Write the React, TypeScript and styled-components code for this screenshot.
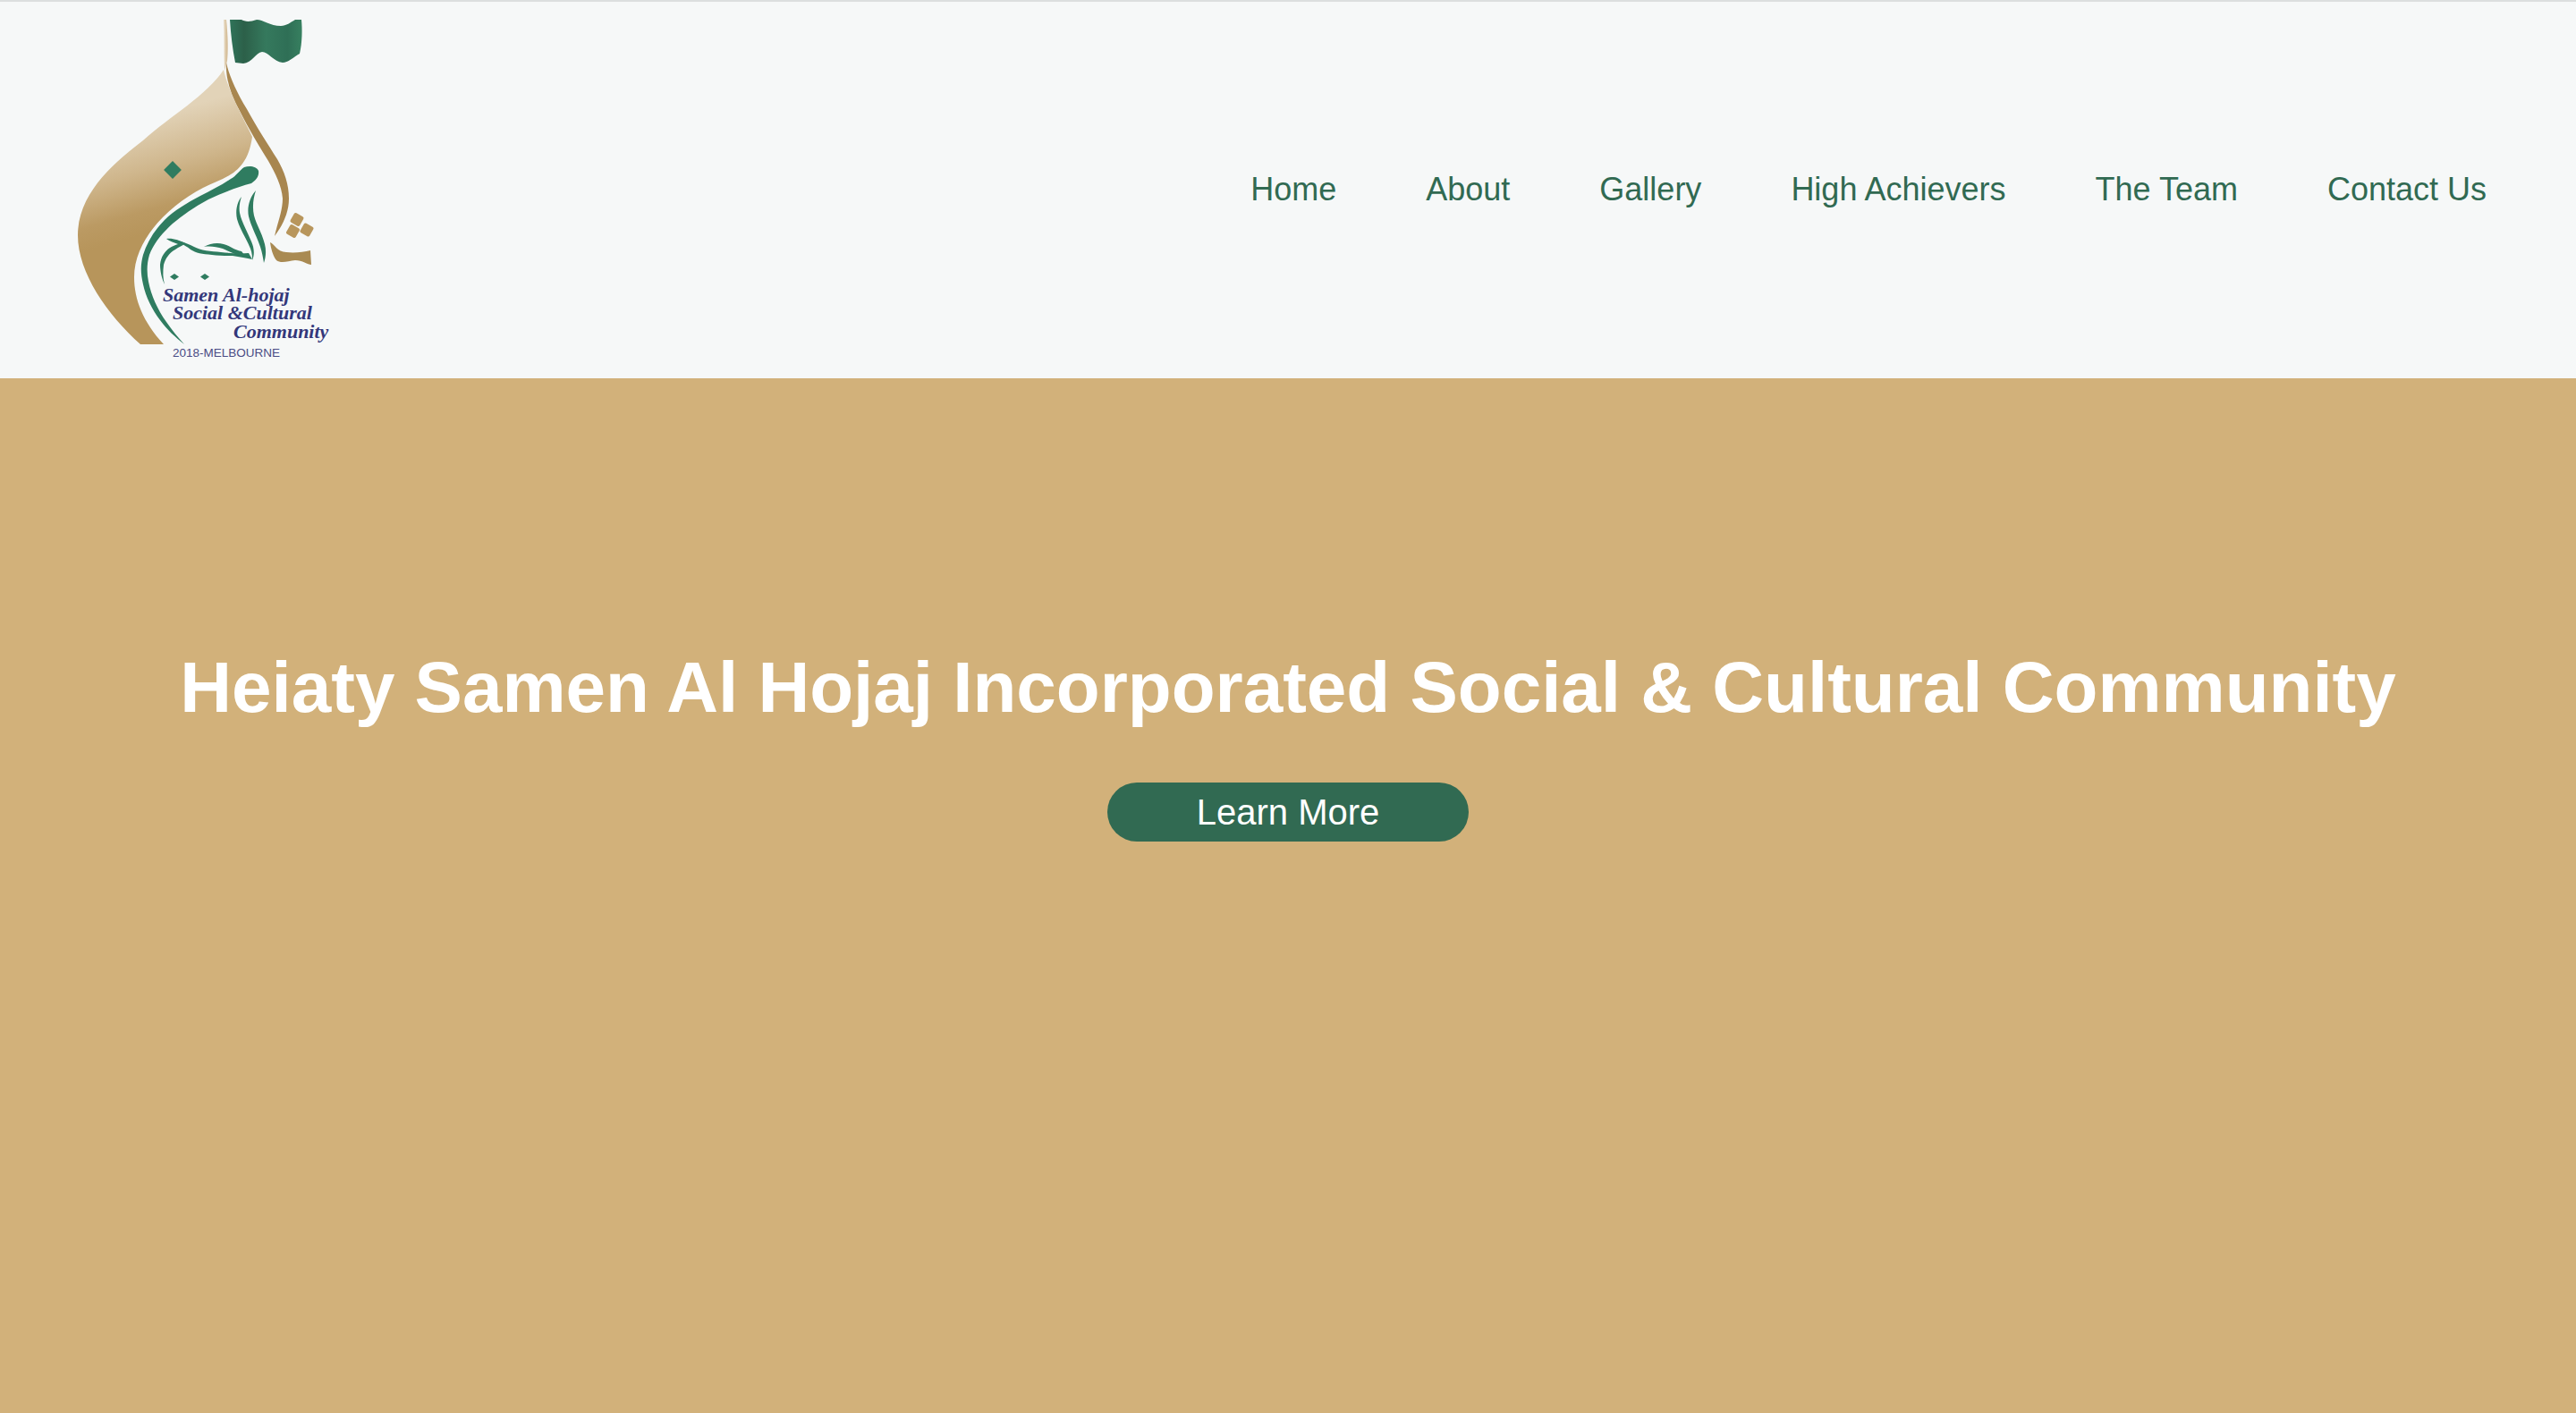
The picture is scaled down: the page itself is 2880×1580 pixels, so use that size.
import React from "react";
import styled, { createGlobalStyle } from "styled-components";

const Global = createGlobalStyle`
  html, body { margin: 0; padding: 0; }
  body { font-family: "Liberation Sans", Arial, sans-serif; background: #d2b17a; }
`;

const Page = styled.div`
  display: flex;
  flex-direction: column;
  width: 2880px;
  height: 1580px;
  overflow: hidden;
`;

const Header = styled.header`
  flex: none;
  box-sizing: border-box;
  height: 423px;
  display: flex;
  align-items: center;
  justify-content: space-between;
  padding: 0 100px 0 60px;
  background: #f6f8f8;
  border-top: 2px solid #dcdfdf;
`;

const LogoSvg = styled.svg`
  display: block;
  width: 340px;
  height: 421px;
  flex: none;
`;

const Nav = styled.nav`
  display: flex;
  gap: 100px;
  align-items: center;
  margin-bottom: 2px;
`;

const NavLink = styled.a`
  font-size: 36px;
  line-height: 44px;
  color: #316a52;
  text-decoration: none;
  white-space: nowrap;
`;

const Hero = styled.main`
  flex: 1;
  display: flex;
  flex-direction: column;
  align-items: center;
  padding-top: 299px;
  background: #d2b17a;
`;

const Title = styled.h1`
  margin: 0;
  font-size: 80px;
  line-height: 94px;
  font-weight: 700;
  color: #ffffff;
  white-space: nowrap;
`;

const LearnMore = styled.a`
  margin-top: 59px;
  box-sizing: border-box;
  width: 404px;
  height: 66px;
  display: flex;
  align-items: center;
  justify-content: center;
  border-radius: 33px;
  background: #316a52;
  color: #ffffff;
  font-size: 40px;
  text-decoration: none;
`;

const GREEN = "#2f7c60";
const TAN = "#b8965c";

const Logo = () => (
  <LogoSvg viewBox="60 2 340 421" aria-label="Samen Al-hojaj logo">
    <defs>
      <linearGradient id="flag" x1="0" x2="1" y1="0" y2="0">
        <stop offset="0" stopColor="#2f7359" />
        <stop offset="0.2" stopColor="#2c6049" />
        <stop offset="0.5" stopColor="#35795d" />
        <stop offset="0.8" stopColor="#2f6f56" />
        <stop offset="1" stopColor="#378060" />
      </linearGradient>
      <linearGradient id="dome" gradientUnits="userSpaceOnUse" x1="188" y1="125" x2="222" y2="245">
        <stop offset="0" stopColor="#e2d3b8" />
        <stop offset="0.45" stopColor="#cfb68c" />
        <stop offset="0.8" stopColor="#bb9a63" />
        <stop offset="1" stopColor="#b7955b" />
      </linearGradient>
      <linearGradient id="pole" x1="0" x2="1" y1="0" y2="0">
        <stop offset="0" stopColor="#eadfca" />
        <stop offset="1" stopColor="#cfb48a" />
      </linearGradient>
    </defs>
    <path
      d="M257 22 L270 22 C273 24 279 25 287 22 C294 22 302 29 314 29 C320 29 325 25 330 22 L337 22 C338 32 338 48 335 60 C328 64 322 70 316 70 C306 69 300 58 293 58 C286 59 282 70 272 71 L263 70 C260 55 258 38 257 22 Z"
      fill="url(#flag)"
    />
    <path d="M250 22 L253 22 C255 40 255 60 254 68 L251 79 C250 60 251 40 250 22 Z" fill="url(#pole)" />
    <path
      d="M253 70 C256 84 264 102 276 122 C288 144 300 162 310 178 C318 192 323 206 323 222 C323 238 316 252 307 264 C310 250 316 236 316 222 C315 208 308 194 300 180 C290 164 278 144 268 124 C258 106 252 88 253 70 Z"
      fill="#a8864f"
    />
    <path
      d="M250 78 C232 106 190 130 160 157 C130 180 87 215 87 263 C87 305 120 352 157 385 L183 385 C160 360 150 335 150 310 C150 270 185 232 227 210 C250 198 276 196 282 153 C274 135 256 105 250 78 Z"
      fill="url(#dome)"
    />
    <rect x="186" y="183" width="14" height="14" transform="rotate(45 193 190)" fill={GREEN} />
    <path
      d="M273 187 C279 185 287 186 289 191 C290 197 286 202 281 205 C266 209 250 215 233 223 C216 232 204 241 193 250 C181 261 172 272 167 285 C164 295 164 305 166 315 C169 330 176 346 186 360 C192 369 199 377 206 385 C196 377 187 369 179 358 C170 346 163 332 160 318 C157 305 157 296 160 285 C164 272 172 258 184 246 C195 235 209 227 224 219 C236 213 248 207 258 200 C264 197 268 190 273 187 Z"
      fill={GREEN}
    />
    <g fill={GREEN}>
      <path d="M270 220 C265 226 263 236 265 245 C268 256 276 268 280 278 C282 283 282 288 282 291 C285 284 284 277 281 270 C276 258 270 248 268 238 C267 232 268 226 270 220 Z" />
      <path d="M286 213 C279 221 276 232 278 242 C281 254 287 264 291 276 C293 282 294 288 295 294 C297 288 298 281 296 273 C293 261 287 252 284 241 C282 232 283 222 286 213 Z" />
      <path d="M186 267 C193 266 201 269 207 272 C204 275 200 276 196 279 C189 283 185 289 183 296 C182 304 182 311 184 318 C181 312 179 303 179 296 C180 287 184 281 190 277 C193 275 196 274 199 273 C195 271 190 270 186 267 Z" />
      <path d="M186 267 C196 269 206 273 213 279 C219 283 226 284 237 285 C244 286 252 286 260 286 C268 287 276 289 282 290 L278 283 C268 284 258 283 247 282 C236 281 224 280 217 276 C208 271 197 268 186 267 Z" />
      <path d="M228 276 C235 272 243 271 250 273 C258 275 262 280 270 281 L274 286 C264 286 256 281 249 278 C242 276 235 275 228 276 Z" />
      <path d="M195 306 L200 309.5 L195 313 L190 309.5 Z" />
      <path d="M229 306 L234 309.5 L229 313 L224 309.5 Z" />
    </g>
    <rect x="326" y="239.5" width="12" height="12" rx="2" transform="rotate(30 332 245.5)" fill={TAN} />
    <rect x="321.5" y="252.5" width="12" height="12" rx="2" transform="rotate(30 327.5 258.5)" fill={TAN} />
    <rect x="337" y="251" width="12" height="12" rx="2" transform="rotate(30 343 257)" fill={TAN} />
    <path
      d="M302 271 C307 273 310 282 320 282 C329 283 339 282 347 280 L348 296 C344 296 338 291 330 291 C322 292 314 295 309 291 C305 286 303 278 302 271 Z"
      fill="#a98a52"
    />
    <g fontFamily="'Liberation Serif', serif" fontStyle="italic" fontWeight="700" fill="#33377a" fontSize="22">
      <text x="182" y="337">Samen Al-hojaj</text>
      <text x="193" y="357">Social &amp;Cultural</text>
      <text x="261" y="378">Community</text>
    </g>
    <text x="193" y="399" fontFamily="'Liberation Sans', sans-serif" fontSize="13.5" fill="#4a4c85">2018-MELBOURNE</text>
  </LogoSvg>
);

const links = ["Home", "About", "Gallery", "High Achievers", "The Team", "Contact Us"];

export default function App() {
  return (
    <Page>
      <Global />
      <Header>
        <Logo />
        <Nav>
          {links.map((l) => (
            <NavLink key={l} href="#">{l}</NavLink>
          ))}
        </Nav>
      </Header>
      <Hero>
        <Title>Heiaty Samen Al Hojaj Incorporated Social &amp; Cultural Community</Title>
        <LearnMore href="#">Learn More</LearnMore>
      </Hero>
    </Page>
  );
}
